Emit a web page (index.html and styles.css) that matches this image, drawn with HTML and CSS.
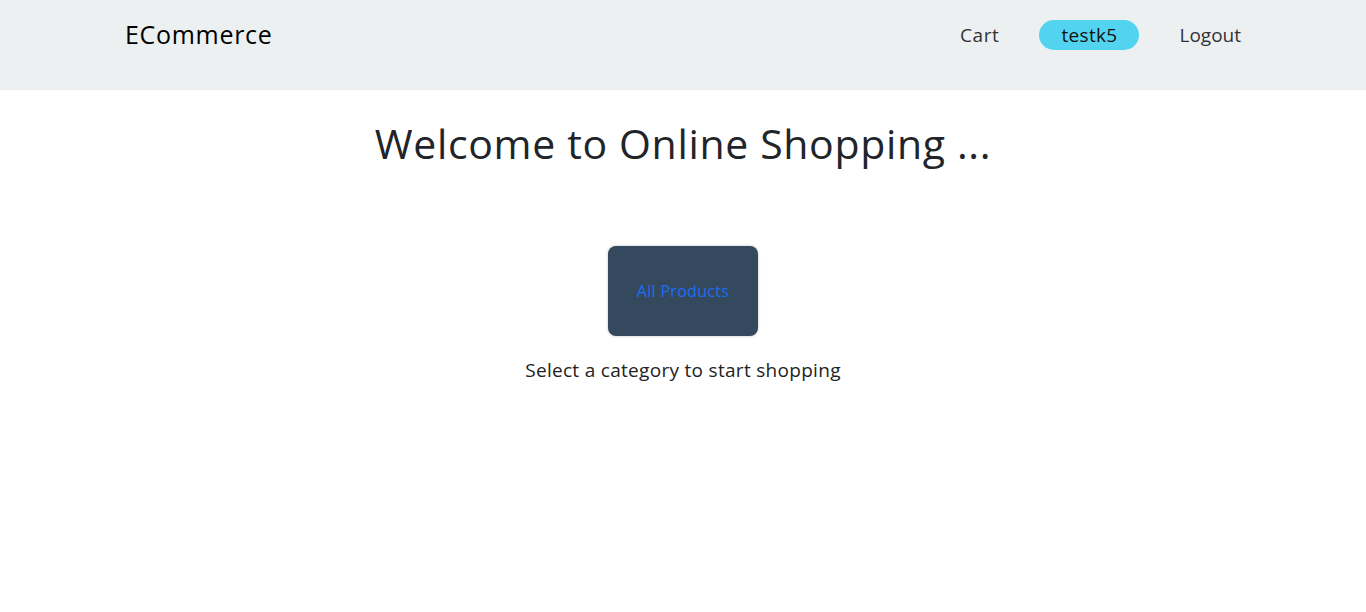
FILE: index.html
```html
<!DOCTYPE html>
<html lang="en">
<head>
<meta charset="utf-8">
<title>ECommerce</title>
<link rel="stylesheet" href="styles.css">
</head>
<body>
<nav class="navbar">
  <div class="container nav-inner">
    <a class="brand" href="#">ECommerce</a>
    <ul class="nav-links">
      <li><a class="nav-link nav-link-cart" href="#">Cart</a></li>
      <li><span class="user-pill">testk5</span></li>
      <li><a class="nav-link" href="#">Logout</a></li>
    </ul>
  </div>
</nav>
<main class="container main">
  <h1 class="title">Welcome to Online Shopping ...</h1>
  <div class="categories">
    <a class="category-card" href="#">All Products</a>
  </div>
  <p class="hint">Select a category to start shopping</p>
</main>
</body>
</html>
```
FILE: styles.css
```css
* { box-sizing: border-box; }
html, body { margin: 0; padding: 0; }
body {
  font-family: "Open Sans", "Noto Sans", sans-serif;
  color: #212529;
  background: #fff;
}
.container {
  max-width: 1140px;
  margin: 0 auto;
  padding: 0 12px;
}
.navbar {
  background: #ecf0f1;
  height: 90px;
}
.nav-inner {
  display: flex;
  align-items: center;
  justify-content: space-between;
  height: 70px;
}
.brand {
  font-size: 25px;
  color: #000;
  text-decoration: none;
  letter-spacing: 0.7px;
  line-height: 1;
  margin-top: -2px;
}
.nav-links {
  display: flex;
  align-items: center;
  list-style: none;
  margin: 0;
  padding: 0;
  gap: 40px;
}
.nav-link {
  font-size: 19px;
  color: #333;
  text-decoration: none;
}
.nav-link-cart {
  letter-spacing: 0.6px;
}
.user-pill {
  display: inline-flex;
  align-items: center;
  justify-content: center;
  width: 100px;
  height: 30px;
  border-radius: 15px;
  background: #52d4f1;
  font-size: 19px;
  color: #111;
  letter-spacing: 0.3px;
}
.main {
  display: flex;
  flex-direction: column;
  align-items: center;
}
.title {
  margin: 29px 0 0;
  font-size: 41px;
  font-weight: 400;
  line-height: 48px;
  letter-spacing: 0.65px;
  color: #212529;
}
.categories {
  margin-top: 79px;
  display: flex;
  justify-content: center;
}
.category-card {
  width: 150px;
  height: 90px;
  display: flex;
  align-items: center;
  justify-content: center;
  background: #34495e;
  border-radius: 8px;
  box-shadow: 0 0 3px rgba(0,0,0,0.25);
  color: #1a6ef5;
  font-size: 16px;
  letter-spacing: 0.3px;
  text-decoration: none;
}
.hint {
  margin: 21px 0 0;
  font-size: 19px;
  letter-spacing: 0.3px;
  color: #222;
}
```
